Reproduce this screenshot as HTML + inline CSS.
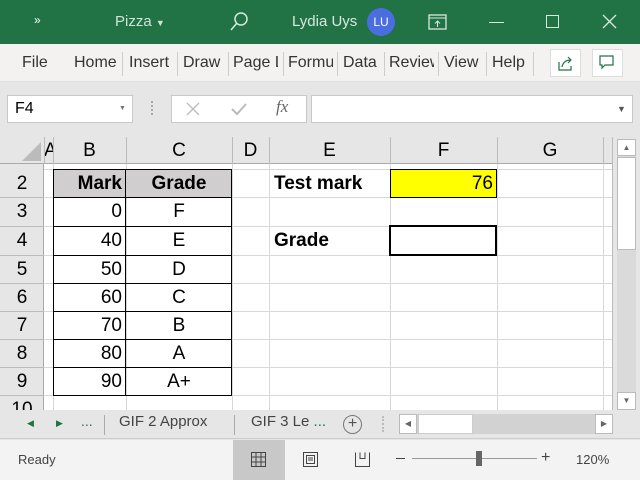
<!DOCTYPE html>
<html><head><meta charset="utf-8"><style>
*{margin:0;padding:0;box-sizing:border-box}
body{width:640px;height:480px;overflow:hidden;background:#e6e6e6;font-family:"Liberation Sans",Arial,sans-serif;position:relative}
.a{position:absolute}
.t{color:#fff;font-size:15px}
.rb{font-size:16px;color:#333;top:54px}
.ch{top:137px;height:27px;font-size:19px;text-align:center;line-height:28px;color:#000}
.rh{left:0;width:44px;height:28px;text-align:center;font-size:19px;line-height:29px}
.c{font-size:19px;line-height:29px;height:29px}
</style></head><body>
<!-- title bar -->
<div class="a" style="left:0;top:0;width:640px;height:44px;background:#217346"></div>
<div class="a t" style="left:34px;top:13px;font-size:12px">»</div>
<div class="a t" style="left:115px;top:13px;color:#cfe3d6">Pizza <span style="font-size:9px">▼</span></div>
<svg class="a" style="left:228px;top:10px" width="22" height="22"><circle cx="13" cy="9" r="6" fill="none" stroke="#d8e8de" stroke-width="1.5"/><line x1="9" y1="13" x2="3" y2="20" stroke="#d8e8de" stroke-width="1.5"/></svg>
<div class="a t" style="left:292px;top:13px;color:#d8e8de">Lydia Uys</div>
<div class="a" style="left:367px;top:8px;width:28px;height:28px;border-radius:50%;background:#4a6ee0;color:#fff;font-size:12px;text-align:center;line-height:28px">LU</div>
<svg class="a" style="left:428px;top:13px" width="20" height="18"><rect x="1" y="2" width="17" height="14" fill="none" stroke="#d8e8de" stroke-width="1.3"/><line x1="1" y1="5" x2="18" y2="5" stroke="#d8e8de"/><path d="M9.5 14V8M7 10.5l2.5-2.5 2.5 2.5" stroke="#d8e8de" fill="none"/></svg>
<div class="a" style="left:489px;top:22px;width:15px;height:1px;background:#d8e8de"></div>
<div class="a" style="left:546px;top:15px;width:13px;height:13px;border:1px solid #d8e8de"></div>
<svg class="a" style="left:602px;top:14px" width="16" height="16"><path d="M1 1L14 14M14 1L1 14" stroke="#d8e8de" stroke-width="1.3"/></svg>
<!-- ribbon -->
<div class="a" style="left:0;top:44px;width:640px;height:38px;background:#f3f2f1;border-bottom:1px solid #ddd"></div>
<div class="a rb" style="left:22px">File</div>
<div class="a rb" style="left:74px">Home</div>
<div class="a rb" style="left:129px">Insert</div>
<div class="a rb" style="left:183px">Draw</div>
<div class="a rb" style="left:233px;width:45px;overflow:hidden;white-space:nowrap">Page Layout</div>
<div class="a rb" style="left:288px;width:45px;overflow:hidden;white-space:nowrap">Formulas</div>
<div class="a rb" style="left:343px">Data</div>
<div class="a rb" style="left:389px;width:45px;overflow:hidden;white-space:nowrap">Review</div>
<div class="a rb" style="left:444px">View</div>
<div class="a rb" style="left:492px">Help</div>
<div class="a" style="left:122px;top:52px;width:1px;height:24px;background:#ccc"></div>
<div class="a" style="left:177px;top:52px;width:1px;height:24px;background:#ccc"></div>
<div class="a" style="left:228px;top:52px;width:1px;height:24px;background:#ccc"></div>
<div class="a" style="left:283px;top:52px;width:1px;height:24px;background:#ccc"></div>
<div class="a" style="left:337px;top:52px;width:1px;height:24px;background:#ccc"></div>
<div class="a" style="left:384px;top:52px;width:1px;height:24px;background:#ccc"></div>
<div class="a" style="left:438px;top:52px;width:1px;height:24px;background:#ccc"></div>
<div class="a" style="left:486px;top:52px;width:1px;height:24px;background:#ccc"></div>
<div class="a" style="left:533px;top:52px;width:1px;height:24px;background:#ccc"></div>
<div class="a" style="left:550px;top:49px;width:31px;height:28px;background:#fff;border:1px solid #ddd"></div>
<svg class="a" style="left:557px;top:54px" width="18" height="18"><path d="M2 8v8h12v-4M5 13c1-5 4-7 9-7M11 3l3 3-3 3" fill="none" stroke="#217346" stroke-width="1.2"/></svg>
<div class="a" style="left:592px;top:49px;width:31px;height:28px;background:#fff;border:1px solid #ddd"></div>
<svg class="a" style="left:599px;top:55px" width="16" height="16"><path d="M1 1h13v9H6l-3 3v-3H1z" fill="none" stroke="#217346" stroke-width="1.2"/></svg>
<!-- formula bar -->
<div class="a" style="left:7px;top:95px;width:126px;height:28px;background:#fff;border:1px solid #c8c8c8;font-size:16px;padding:4px 0 0 7px">F4</div>
<div class="a" style="left:119px;top:105px;font-size:7px;color:#777">▼</div>
<div class="a" style="left:151px;top:101px;width:2px;height:14px;border-left:2px dotted #aaa"></div>
<div class="a" style="left:171px;top:95px;width:136px;height:28px;background:#fff;border:1px solid #c8c8c8"></div>
<svg class="a" style="left:185px;top:101px" width="16" height="16"><path d="M2 2L14 14M14 2L2 14" stroke="#bbb" stroke-width="1.3"/></svg>
<svg class="a" style="left:230px;top:101px" width="18" height="16"><path d="M2 8l5 5L16 3" stroke="#bbb" stroke-width="2" fill="none"/></svg>
<div class="a" style="left:276px;top:97px;font-family:'Liberation Serif',serif;font-style:italic;font-size:17px;color:#666">fx</div>
<div class="a" style="left:311px;top:95px;width:322px;height:28px;background:#fff;border:1px solid #c8c8c8"></div>
<div class="a" style="left:617px;top:104px;font-size:9px;color:#555">▼</div>
<!-- grid -->
<div class="a" style="left:0;top:137px;width:613px;height:273px;background:#fff"></div>
<div class="a" style="left:0;top:137px;width:613px;height:27px;background:#e6e6e6;border-bottom:1px solid #aaa"></div>
<div class="a" style="left:0;top:164px;width:44px;height:246px;background:#e6e6e6;border-right:1px solid #aaa"></div>
<svg class="a" style="left:20px;top:140px" width="22" height="22"><path d="M21 2V21H2z" fill="#bbb"/></svg>
<div class="a ch" style="left:44px;width:9px;overflow:hidden">A</div>
<div class="a ch" style="left:53px;width:73px">B</div>
<div class="a ch" style="left:126px;width:106px">C</div>
<div class="a ch" style="left:232px;width:37px">D</div>
<div class="a ch" style="left:269px;width:121px">E</div>
<div class="a ch" style="left:390px;width:107px">F</div>
<div class="a ch" style="left:497px;width:106px">G</div>
<svg class="a" style="left:0;top:137px" width="613" height="273">
<g stroke="#bbb"><line x1="44.5" y1="0" x2="44.5" y2="27"/><line x1="53.5" y1="0" x2="53.5" y2="27"/><line x1="126.5" y1="0" x2="126.5" y2="27"/><line x1="232.5" y1="0" x2="232.5" y2="27"/><line x1="269.5" y1="0" x2="269.5" y2="27"/><line x1="390.5" y1="0" x2="390.5" y2="27"/><line x1="497.5" y1="0" x2="497.5" y2="27"/><line x1="603.5" y1="0" x2="603.5" y2="27"/></g>
<g stroke="#d8d8d8">
<line x1="53.5" y1="27" x2="53.5" y2="273"/><line x1="126.5" y1="27" x2="126.5" y2="273"/><line x1="232.5" y1="27" x2="232.5" y2="273"/><line x1="269.5" y1="27" x2="269.5" y2="273"/><line x1="390.5" y1="27" x2="390.5" y2="273"/><line x1="497.5" y1="27" x2="497.5" y2="273"/><line x1="603.5" y1="27" x2="603.5" y2="273"/>
<line x1="44" y1="32.5" x2="613" y2="32.5"/><line x1="44" y1="60.5" x2="613" y2="60.5"/><line x1="44" y1="89.5" x2="613" y2="89.5"/><line x1="44" y1="118.5" x2="613" y2="118.5"/><line x1="44" y1="146.5" x2="613" y2="146.5"/><line x1="44" y1="174.5" x2="613" y2="174.5"/><line x1="44" y1="202.5" x2="613" y2="202.5"/><line x1="44" y1="230.5" x2="613" y2="230.5"/><line x1="44" y1="258.5" x2="613" y2="258.5"/>
</g>
<g stroke="#bbb"><line x1="0" y1="60.5" x2="44" y2="60.5"/><line x1="0" y1="89.5" x2="44" y2="89.5"/><line x1="0" y1="118.5" x2="44" y2="118.5"/><line x1="0" y1="146.5" x2="44" y2="146.5"/><line x1="0" y1="174.5" x2="44" y2="174.5"/><line x1="0" y1="202.5" x2="44" y2="202.5"/><line x1="0" y1="230.5" x2="44" y2="230.5"/><line x1="0" y1="258.5" x2="44" y2="258.5"/><line x1="612.5" y1="0" x2="612.5" y2="273"/></g>
<rect x="54" y="33" width="178" height="27" fill="#d0cece"/>
<rect x="391" y="33" width="106" height="27" fill="#ffff00"/>
<g stroke="#000" fill="none"><rect x="53.5" y="32.5" width="178" height="226"/><line x1="125.5" y1="32.5" x2="125.5" y2="258.5"/>
<line x1="53" y1="60.5" x2="232" y2="60.5"/><line x1="53" y1="89.5" x2="232" y2="89.5"/><line x1="53" y1="118.5" x2="232" y2="118.5"/><line x1="53" y1="146.5" x2="232" y2="146.5"/><line x1="53" y1="174.5" x2="232" y2="174.5"/><line x1="53" y1="202.5" x2="232" y2="202.5"/><line x1="53" y1="230.5" x2="232" y2="230.5"/>
<rect x="390.5" y="32.5" width="106" height="28"/><rect x="390" y="89" width="106" height="29" stroke-width="2"/></g>
</svg>
<div class="a rh" style="top:169px">2</div><div class="a rh" style="top:197px">3</div><div class="a rh" style="top:226px">4</div><div class="a rh" style="top:255px">5</div><div class="a rh" style="top:283px">6</div><div class="a rh" style="top:311px">7</div><div class="a rh" style="top:339px">8</div><div class="a rh" style="top:367px">9</div>
<div class="a rh" style="top:395px;height:15px;overflow:hidden">10</div>
<div class="a c" style="left:54px;top:169px;width:68px;text-align:right;font-weight:bold">Mark</div>
<div class="a c" style="left:126px;top:169px;width:106px;text-align:center;font-weight:bold">Grade</div>
<div class="a c" style="left:54px;top:197px;width:68px;text-align:right">0</div><div class="a c" style="left:126px;top:197px;width:106px;text-align:center">F</div>
<div class="a c" style="left:54px;top:226px;width:68px;text-align:right">40</div><div class="a c" style="left:126px;top:226px;width:106px;text-align:center">E</div>
<div class="a c" style="left:54px;top:255px;width:68px;text-align:right">50</div><div class="a c" style="left:126px;top:255px;width:106px;text-align:center">D</div>
<div class="a c" style="left:54px;top:283px;width:68px;text-align:right">60</div><div class="a c" style="left:126px;top:283px;width:106px;text-align:center">C</div>
<div class="a c" style="left:54px;top:311px;width:68px;text-align:right">70</div><div class="a c" style="left:126px;top:311px;width:106px;text-align:center">B</div>
<div class="a c" style="left:54px;top:339px;width:68px;text-align:right">80</div><div class="a c" style="left:126px;top:339px;width:106px;text-align:center">A</div>
<div class="a c" style="left:54px;top:367px;width:68px;text-align:right">90</div><div class="a c" style="left:126px;top:367px;width:106px;text-align:center">A+</div>
<div class="a c" style="left:274px;top:169px;font-weight:bold">Test mark</div>
<div class="a c" style="left:391px;top:169px;width:102px;text-align:right">76</div>
<div class="a c" style="left:274px;top:226px;font-weight:bold">Grade</div>
<!-- vscroll -->
<div class="a" style="left:617px;top:139px;width:19px;height:271px;background:#dadada"></div>
<div class="a" style="left:617px;top:139px;width:19px;height:17px;background:#fff;border:1px solid #bbb;font-size:8px;color:#666;text-align:center;line-height:15px">▲</div>
<div class="a" style="left:617px;top:157px;width:19px;height:93px;background:#fff;border:1px solid #bbb"></div>
<div class="a" style="left:617px;top:392px;width:19px;height:18px;background:#fff;border:1px solid #bbb;font-size:8px;color:#666;text-align:center;line-height:16px">▼</div>
<!-- tabs -->
<div class="a" style="left:0;top:410px;width:640px;height:29px;background:#e6e6e6;border-bottom:1px solid #ccc"></div>
<div class="a" style="left:27px;top:418px;font-size:9px;color:#217346">◀</div>
<div class="a" style="left:56px;top:418px;font-size:9px;color:#217346">▶</div>
<div class="a" style="left:81px;top:413px;font-size:14px;color:#217346">...</div>
<div class="a" style="left:104px;top:415px;width:1px;height:20px;background:#aaa"></div>
<div class="a" style="left:119px;top:413px;font-size:15px;color:#444">GIF 2 Approx</div>
<div class="a" style="left:234px;top:415px;width:1px;height:20px;background:#aaa"></div>
<div class="a" style="left:251px;top:413px;font-size:15px;color:#444">GIF 3 Le <span style="color:#217346">...</span></div>
<div class="a" style="left:343px;top:415px;width:19px;height:19px;border:1px solid #777;border-radius:50%;color:#555;font-size:16px;text-align:center;line-height:16px">+</div>
<div class="a" style="left:382px;top:416px;border-left:2px dotted #bbb;height:16px"></div>
<div class="a" style="left:399px;top:414px;width:214px;height:20px;background:#d2d2d2"></div>
<div class="a" style="left:399px;top:414px;width:18px;height:20px;background:#fff;border:1px solid #bbb;font-size:8px;color:#666;text-align:center;line-height:18px">◀</div>
<div class="a" style="left:418px;top:414px;width:55px;height:20px;background:#fff;border:1px solid #ccc"></div>
<div class="a" style="left:595px;top:414px;width:18px;height:20px;background:#fff;border:1px solid #bbb;font-size:8px;color:#666;text-align:center;line-height:18px">▶</div>
<!-- status -->
<div class="a" style="left:0;top:440px;width:640px;height:40px;background:#f3f3f3"></div>
<div class="a" style="left:18px;top:452px;font-size:13px;color:#444">Ready</div>
<div class="a" style="left:233px;top:440px;width:52px;height:40px;background:#c8c8c8"></div>
<svg class="a" style="left:250px;top:451px" width="17" height="17"><g stroke="#444" fill="none"><rect x="1.5" y="1.5" width="14" height="14"/><path d="M6 1.5v14M11 1.5v14M1.5 6h14M1.5 11h14"/></g></svg>
<svg class="a" style="left:302px;top:451px" width="17" height="17"><g stroke="#444" fill="none"><rect x="1.5" y="1.5" width="14" height="14"/><rect x="4.5" y="4.5" width="8" height="8"/><path d="M6 7h5M6 9h5"/></g></svg>
<svg class="a" style="left:354px;top:451px" width="17" height="17"><g stroke="#444" fill="none"><path d="M1.5 1.5v14h14v-14M6 1.5v6h5v-6"/></g></svg>
<div class="a" style="left:396px;top:458px;width:9px;height:1px;background:#444"></div>
<div class="a" style="left:412px;top:458px;width:125px;height:1px;background:#999"></div>
<div class="a" style="left:476px;top:451px;width:6px;height:15px;background:#666"></div>
<div class="a" style="left:541px;top:449px;font-size:16px;color:#444">+</div>
<div class="a" style="left:576px;top:452px;font-size:13px;color:#444">120%</div>
</body></html>
